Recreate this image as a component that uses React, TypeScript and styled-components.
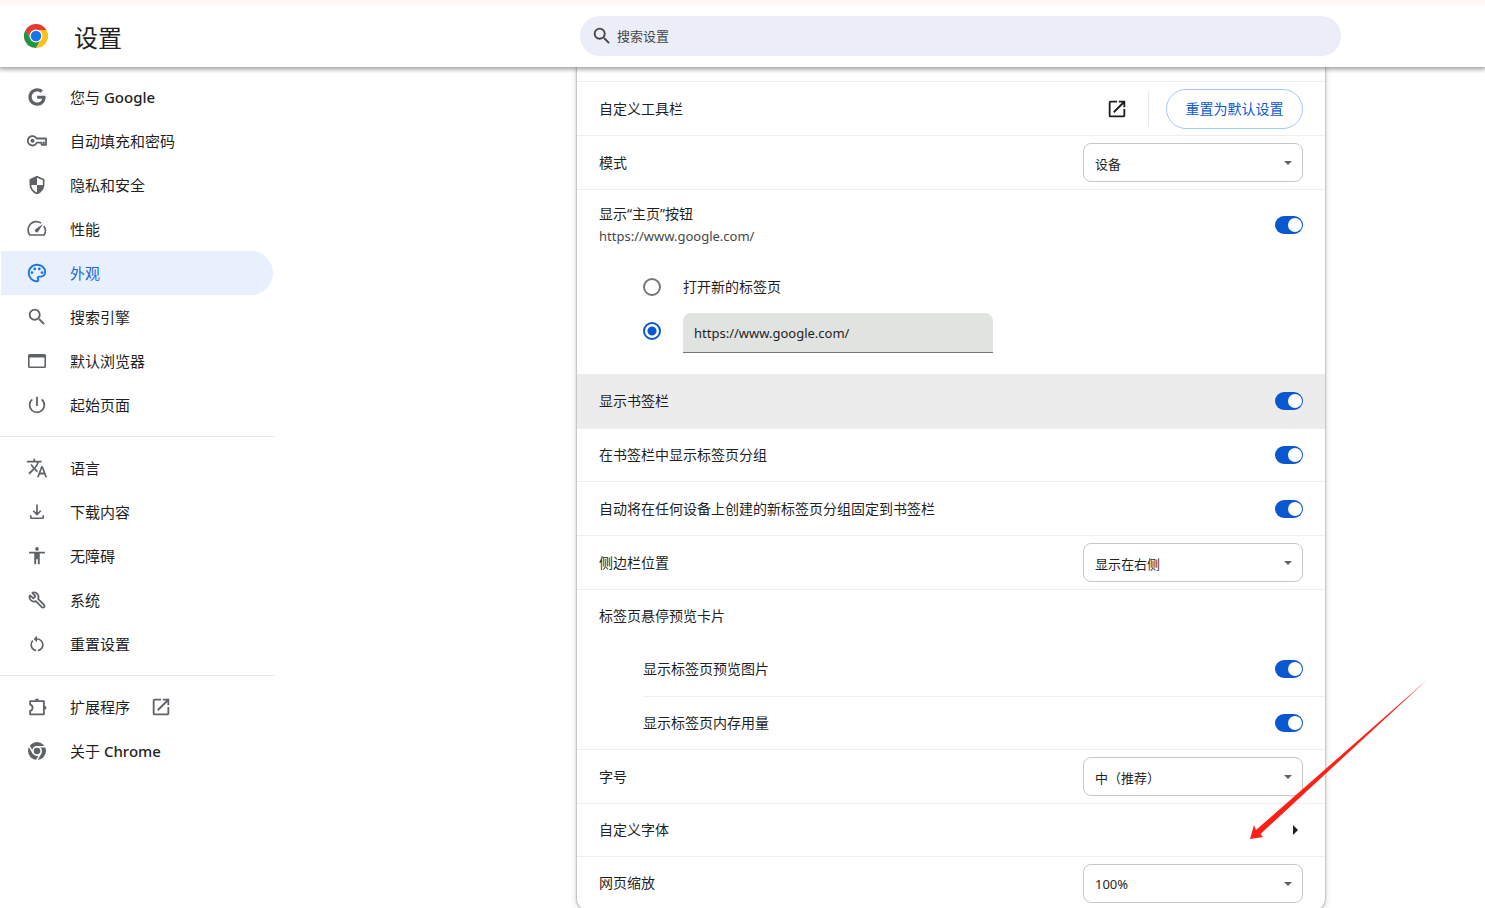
import React, { useState } from "react";
import styled, { createGlobalStyle, css } from "styled-components";
import { Wrench } from "lucide-react";
import { FaGoogle } from "react-icons/fa";
import {
  MdOpenInNew,
  MdOutlinePalette,
  MdPowerSettingsNew,
  MdRestartAlt,
  MdSearch,
  MdTranslate,
} from "react-icons/md";

const GlobalStyle = createGlobalStyle`
  *, *::before, *::after { box-sizing: border-box; }
  body {
    margin: 0;
    background: #fff;
    color: #1f1f1f;
    font-family: "Noto Sans", "Noto Sans CJK SC", sans-serif;
    font-size: 14px;
    line-height: 20px;
  }
  button, input, select { font: inherit; color: inherit; }
`;

const Page = styled.div`
  height: 100vh;
  display: flex;
  flex-direction: column;
  overflow: hidden;
`;

const Header = styled.header`
  position: relative;
  z-index: 2;
  flex: none;
  height: 67px;
  display: grid;
  grid-template-columns: 275px minmax(0, 305fr) minmax(0, 761px) minmax(0, 144fr);
  align-items: center;
  border-top: 5px solid #fff7f4;
  background: #fff;
  box-shadow: 0 1px 5px 1px rgba(0, 0, 0, 0.42);
  clip-path: inset(0 0 -6px 0);
`;

const Brand = styled.div`
  display: flex;
  align-items: center;
  gap: 26px;
  padding-left: 24px;
`;

const Title = styled.h1`
  margin: 0;
  padding-top: 4px;
  font-size: 24px;
  line-height: 32px;
  font-weight: 400;
`;

const SearchBox = styled.label`
  grid-column: 3;
  height: 40px;
  display: flex;
  align-items: center;
  gap: 4px;
  padding: 0 11px;
  border-radius: 20px;
  background: #ebeef8;
  color: #444746;
  svg { flex: none; }
`;

const SearchInput = styled.input`
  flex: 1;
  min-width: 0;
  padding: 0;
  border: 0;
  outline: 0;
  background: transparent;
  font-size: 13px;
  &::placeholder { color: #444746; opacity: 1; }
`;

const Body = styled.div`
  flex: 1;
  min-height: 0;
  display: grid;
  grid-template-columns: 275px minmax(0, 1fr);
`;

const Sidebar = styled.nav`
  padding-top: 8px;
`;

const MenuGroup = styled.div`
  & + & {
    margin-top: 9px;
    padding-top: 9px;
    border-top: 1px solid #e8e8e9;
  }
`;

const MenuItem = styled.a<{ $active?: boolean }>`
  height: 44px;
  display: flex;
  align-items: center;
  margin: 0 2px 0 1px;
  padding-left: 25px;
  border-radius: 0 22px 22px 0;
  color: ${(p) => (p.$active ? "#1967d2" : "#1f1f1f")};
  background: ${(p) => (p.$active ? "#e8f0fe" : "transparent")};
  font-size: 15px;
  text-decoration: none;
`;

const MenuIcon = styled.span<{ $active?: boolean }>`
  width: 22px;
  height: 22px;
  display: grid;
  place-items: center;
  margin-right: 22px;
  color: ${(p) => (p.$active ? "#1a73e8" : "#5f6368")};
`;

const Latin = styled.span`
  font-weight: 500;
`;

const TrailingIcon = styled.span`
  display: flex;
  margin-left: 20px;
  color: #5f6368;
`;

const Main = styled.main`
  min-height: 0;
  overflow: hidden;
  display: grid;
  grid-template-columns: minmax(0, 302fr) minmax(0, 748px) minmax(0, 160fr);
`;

const Card = styled.section`
  grid-column: 2;
  align-self: start;
  position: relative;
  padding-top: 14px;
  border-radius: 0 0 9px 9px;
  background: #fff;
  box-shadow: 0 0 2px rgba(0, 0, 0, 0.5), 0 1px 6px rgba(0, 0, 0, 0.22);
`;

const rowBase = css`
  display: flex;
  align-items: center;
  justify-content: space-between;
`;

type RowProps = { $nested?: boolean; $plain?: boolean; $hover?: boolean; $afterHover?: boolean; $short?: boolean };

const Row = styled.div<RowProps>`
  ${rowBase}
  height: ${(p) => (p.$short ? 53 : 54)}px;
  margin-left: ${(p) => (p.$nested ? 66 : 0)}px;
  padding: 0 22px 0 ${(p) => (p.$nested ? 0 : 22)}px;
  border-top: ${(p) => (p.$plain || p.$hover ? "0" : "1px")} solid ${(p) => (p.$afterHover ? "#ececec" : "#eeeeef")};
  background: ${(p) => (p.$hover ? "#ececec" : "transparent")};
`;

const HomeSection = styled.div`
  border-top: 1px solid #eeeeef;
  padding-bottom: 21px;
`;

const HomeRow = styled.div`
  ${rowBase}
  height: 70px;
  padding: 0 22px;
`;

const Stack = styled.div`
  display: grid;
  gap: 2px;
`;

const Secondary = styled.span`
  color: #474747;
  font-size: 13px;
`;

const Options = styled.div`
  padding: 5px 66px 0;
`;

const Option = styled.div`
  display: flex;
  align-items: center;
  gap: 22px;
  min-height: 44px;
`;

const Radio = styled.input`
  appearance: none;
  flex: none;
  width: 18px;
  height: 18px;
  margin: 0;
  border: 2px solid #747775;
  border-radius: 50%;
  &:checked {
    border-color: #0b57d0;
    background: radial-gradient(circle, #0b57d0 0 4px, transparent 5px);
  }
`;

const UrlInput = styled.input`
  align-self: flex-end;
  width: 310px;
  height: 40px;
  padding: 0 11px;
  border: 0;
  border-bottom: 1px solid #747775;
  border-radius: 8px 8px 0 0;
  outline: 0;
  background: #e1e3e1;
  font-size: 13px;
`;

const Toggle = styled.input`
  appearance: none;
  flex: none;
  display: flex;
  align-items: center;
  width: 28px;
  height: 18px;
  margin: 0;
  padding: 0 1px;
  border-radius: 9px;
  background: #c4c7c5;
  &::before {
    content: "";
    width: 14px;
    height: 14px;
    border-radius: 50%;
    background: #fff;
  }
  &:checked {
    justify-content: flex-end;
    background: #0b57d0;
  }
`;

const SelectWrap = styled.div`
  position: relative;
  width: 220px;
  svg {
    position: absolute;
    right: 11px;
    top: 18px;
    pointer-events: none;
  }
`;

const SelectBox = styled.select`
  appearance: none;
  width: 100%;
  height: 39px;
  display: block;
  padding: 2px 30px 0 11px;
  border: 1px solid #c7c7c7;
  border-radius: 8px;
  background: #fff;
  font-size: 13px;
`;

const Actions = styled.div`
  display: flex;
  align-items: center;
`;

const IconButton = styled.button`
  display: flex;
  padding: 0;
  border: 0;
  background: none;
  color: #1f1f1f;
`;

const Divider = styled.span`
  width: 1px;
  height: 35px;
  margin: 0 17px 0 20px;
  background: #e8e8e9;
`;

const OutlineButton = styled.button`
  height: 40px;
  min-width: 137px;
  padding: 0 18px;
  border: 1px solid #a8c7fa;
  border-radius: 20px;
  background: #fff;
  color: #0b57d0;
`;

const ArrowButton = styled(IconButton)`
  margin-right: 5px;
`;

const Pointer = styled.svg`
  position: absolute;
  right: -104px;
  top: 612px;
  pointer-events: none;
`;

const ChromeLogo = () => (
  <svg width="24" height="24" viewBox="0 0 48 48" aria-hidden="true">
    <path d="M3.2 12a24 24 0 0 0 20.8 36l10.4-18a12 12 0 0 1-20.8 0z" fill="#229342" />
    <path d="M24 48A24 24 0 0 0 44.8 12H24a12 12 0 0 1 10.4 18z" fill="#fbc116" />
    <path d="M3.2 12A24 24 0 0 1 44.8 12H24a12 12 0 0 0-10.4 18z" fill="#e33b2e" />
    <circle cx="24" cy="24" r="13" fill="#fff" />
    <circle cx="24" cy="24" r="10.5" fill="#1a73e8" />
  </svg>
);

const ChromeMono = () => (
  <svg width="18" height="18" viewBox="0 0 48 48" aria-hidden="true">
    <circle cx="24" cy="24" r="24" fill="currentColor" />
    <circle cx="24" cy="24" r="11" fill="none" stroke="#fff" strokeWidth="4.500" />
    <path d="M24 12.500H46M14 29.800 3 10.700M34 29.800 23 49" stroke="#fff" strokeWidth="4" />
  </svg>
);

const Key = () => (
  <svg width="20" height="12" viewBox="0 0 20 12" fill="none" stroke="currentColor" aria-hidden="true">
    <path
      d="M9.600 3.500H19V9.800H14.600V7.600H9.800A4.700 4.700 0 1 1 9.600 3.500zM16.800 6.500V9.800"
      strokeWidth="1.800"
      strokeLinejoin="round"
    />
    <circle cx="5.500" cy="5.800" r="2" fill="currentColor" stroke="none" />
  </svg>
);

const Shield = () => (
  <svg width="20" height="20" viewBox="0 0 24 24" aria-hidden="true">
    <path
      d="M12 1l9 4v6c0 5.550-3.840 10.740-9 12-5.160-1.260-9-6.450-9-12V5zm0 10.990H5c.53 4.120 3.280 7.790 7 8.940V12h7V6.300l-7-3.110z"
      fill="currentColor"
      fillRule="evenodd"
    />
  </svg>
);

const Speed = () => (
  <svg width="22" height="22" viewBox="0 0 24 24" fill="none" stroke="currentColor" aria-hidden="true">
    <path d="M16.500 5.600A9 9 0 0 0 4.200 18.500H19.800A9 9 0 0 0 19.500 8.700" strokeWidth="1.800" />
    <path d="M18.500 6.500 10.600 12a2 2 0 1 0 2.800 2.800z" fill="currentColor" stroke="none" />
  </svg>
);

const BrowserWindow = () => (
  <svg width="18" height="14" viewBox="0 0 18 14" aria-hidden="true">
    <path
      d="M1.500 0h15A1.500 1.500 0 0 1 18 1.500v11a1.500 1.500 0 0 1-1.500 1.500h-15A1.500 1.500 0 0 1 0 12.500v-11A1.500 1.500 0 0 1 1.500 0zM1.600 3.600v8.800h14.800V3.600z"
      fill="currentColor"
      fillRule="evenodd"
    />
  </svg>
);

const Download = () => (
  <svg width="20" height="20" viewBox="0 0 24 24" fill="none" stroke="currentColor" strokeWidth="2" aria-hidden="true">
    <path d="M12 3v12M7.500 10.500 12 15l4.500-4.500M4.500 16v2.500q0 1 1 1h13q1 0 1-1V16" />
  </svg>
);

const Person = () => (
  <svg width="20" height="20" viewBox="0 0 24 24" fill="currentColor" aria-hidden="true">
    <circle cx="12" cy="3.500" r="2.200" />
    <path d="M21.500 6.800h-19v2.200h6.200v13h2.300v-6h2v6h2.300V9h6.200z" />
  </svg>
);

const Puzzle = () => (
  <svg width="22" height="22" viewBox="0 0 24 24" aria-hidden="true">
    <path
      d="M4.500 5.500H19.500V20H4.500V16.200C6.500 15.600 7.200 14.200 7.200 12.800S6.500 10 4.500 9.400z"
      fill="none"
      stroke="currentColor"
      strokeWidth="2"
      strokeLinejoin="round"
    />
    <path d="M9.700 5a2.300 2.300 0 0 1 4.600 0zM20 10.500a2.300 2.300 0 0 1 0 4.600z" fill="currentColor" />
  </svg>
);

type Item = { label: string; latin?: string; icon: React.ReactNode; active?: boolean; external?: boolean };

const groups: Item[][] = [
  [
    { label: "您与 ", latin: "Google", icon: <FaGoogle size={18} /> },
    { label: "自动填充和密码", icon: <Key /> },
    { label: "隐私和安全", icon: <Shield /> },
    { label: "性能", icon: <Speed /> },
    { label: "外观", icon: <MdOutlinePalette size={22} />, active: true },
    { label: "搜索引擎", icon: <MdSearch size={22} /> },
    { label: "默认浏览器", icon: <BrowserWindow /> },
    { label: "起始页面", icon: <MdPowerSettingsNew size={22} /> },
  ],
  [
    { label: "语言", icon: <MdTranslate size={22} /> },
    { label: "下载内容", icon: <Download /> },
    { label: "无障碍", icon: <Person /> },
    { label: "系统", icon: <Wrench size={18} strokeWidth={2.4} transform="scale(-1 1)" /> },
    { label: "重置设置", icon: <MdRestartAlt size={20} /> },
  ],
  [
    { label: "扩展程序", icon: <Puzzle />, external: true },
    { label: "关于 ", latin: "Chrome", icon: <ChromeMono /> },
  ],
];

const Switch = ({ id }: { id: string }) => {
  const [on, setOn] = useState(true);
  return <Toggle id={id} type="checkbox" role="switch" checked={on} onChange={() => setOn(!on)} />;
};

const Select = ({ id, options }: { id: string; options: string[] }) => (
  <SelectWrap>
    <SelectBox id={id}>
      {options.map((o) => (
        <option key={o}>{o}</option>
      ))}
    </SelectBox>
    <svg width="8" height="4" viewBox="0 0 8 4" aria-hidden="true">
      <path d="M0 0h8L4 4z" fill="#5f6368" />
    </svg>
  </SelectWrap>
);

export default function App() {
  const [home, setHome] = useState("url");
  const [url, setUrl] = useState("https://www.google.com/");
  return (
    <Page lang="zh-CN">
      <GlobalStyle />
      <Header>
        <Brand>
          <ChromeLogo />
          <Title>设置</Title>
        </Brand>
        <SearchBox>
          <MdSearch size={22} />
          <SearchInput type="search" placeholder="搜索设置" aria-label="搜索设置" />
        </SearchBox>
      </Header>
      <Body>
        <Sidebar>
          {groups.map((items, i) => (
            <MenuGroup key={i}>
              {items.map((it) => (
                <MenuItem key={it.label} href="#" $active={it.active}>
                  <MenuIcon $active={it.active}>{it.icon}</MenuIcon>
                  <span>
                    {it.label}
                    {it.latin && <Latin>{it.latin}</Latin>}
                  </span>
                  {it.external && (
                    <TrailingIcon>
                      <MdOpenInNew size={22} />
                    </TrailingIcon>
                  )}
                </MenuItem>
              ))}
            </MenuGroup>
          ))}
        </Sidebar>
        <Main>
          <Card>
            <Row>
              <span>自定义工具栏</span>
              <Actions>
                <IconButton aria-label="自定义工具栏">
                  <MdOpenInNew size={22} />
                </IconButton>
                <Divider />
                <OutlineButton>重置为默认设置</OutlineButton>
              </Actions>
            </Row>
            <Row>
              <label htmlFor="mode">模式</label>
              <Select id="mode" options={["设备", "浅色", "深色"]} />
            </Row>
            <HomeSection>
              <HomeRow>
                <Stack>
                  <label htmlFor="home">显示“主页”按钮</label>
                  <Secondary>https://www.google.com/</Secondary>
                </Stack>
                <Switch id="home" />
              </HomeRow>
              <Options>
                <Option>
                  <Radio id="newtab" type="radio" name="home" checked={home === "tab"} onChange={() => setHome("tab")} />
                  <label htmlFor="newtab">打开新的标签页</label>
                </Option>
                <Option>
                  <Radio
                    type="radio"
                    name="home"
                    aria-label="输入自定义网址"
                    checked={home === "url"}
                    onChange={() => setHome("url")}
                  />
                  <UrlInput aria-label="自定义网址" value={url} onChange={(e) => setUrl(e.target.value)} />
                </Option>
              </Options>
            </HomeSection>
            <Row $hover>
              <label htmlFor="bookmarks">显示书签栏</label>
              <Switch id="bookmarks" />
            </Row>
            <Row $short $afterHover>
              <label htmlFor="groups">在书签栏中显示标签页分组</label>
              <Switch id="groups" />
            </Row>
            <Row>
              <label htmlFor="pin">自动将在任何设备上创建的新标签页分组固定到书签栏</label>
              <Switch id="pin" />
            </Row>
            <Row>
              <label htmlFor="side">侧边栏位置</label>
              <Select id="side" options={["显示在右侧", "显示在左侧"]} />
            </Row>
            <Row $short>
              <span>标签页悬停预览卡片</span>
            </Row>
            <Row $nested $plain>
              <label htmlFor="images">显示标签页预览图片</label>
              <Switch id="images" />
            </Row>
            <Row $nested $short>
              <label htmlFor="memory">显示标签页内存用量</label>
              <Switch id="memory" />
            </Row>
            <Row>
              <label htmlFor="size">字号</label>
              <Select id="size" options={["中（推荐）", "小", "大"]} />
            </Row>
            <Row $short>
              <span>自定义字体</span>
              <ArrowButton aria-label="自定义字体">
                <svg width="5" height="10" viewBox="0 0 5 10" aria-hidden="true">
                  <path d="M0 0l5 5-5 5z" fill="currentColor" />
                </svg>
              </ArrowButton>
            </Row>
            <Row $short>
              <label htmlFor="zoom">网页缩放</label>
              <Select id="zoom" options={["100%", "110%", "125%"]} />
            </Row>
            <Pointer width="180" height="162" viewBox="0 0 180 162" aria-hidden="true">
              <path d="M179 0 11.500 155 14 158 1 160 5 146 7 151z" fill="#ff2015" />
            </Pointer>
          </Card>
        </Main>
      </Body>
    </Page>
  );
}
